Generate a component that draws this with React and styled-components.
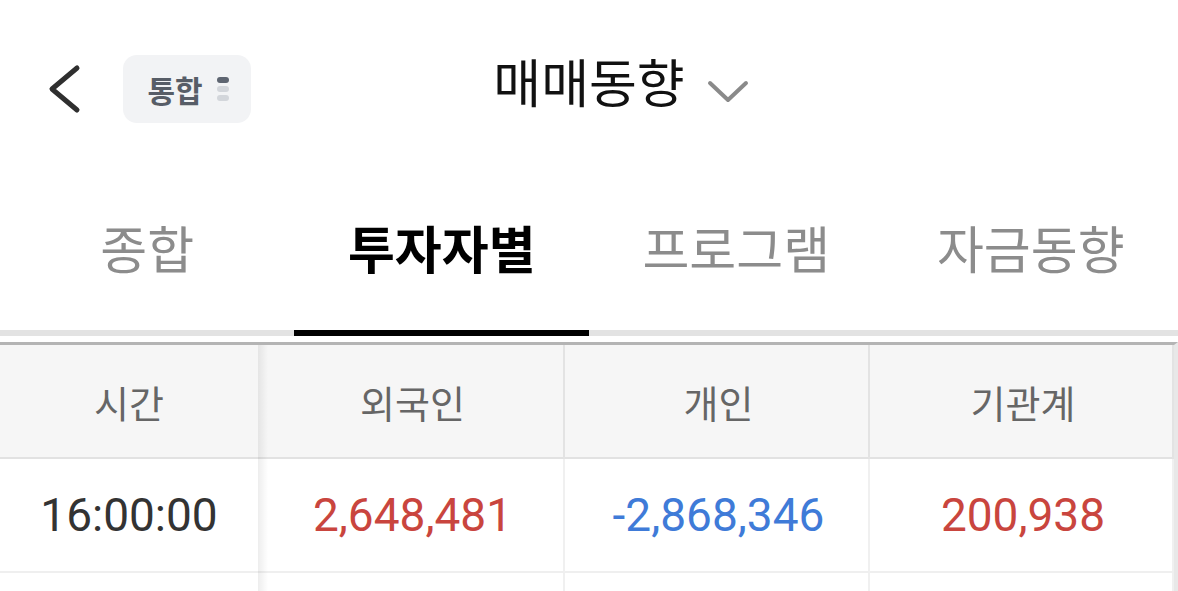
import React from "react";
import styled, { createGlobalStyle } from "styled-components";

const GlobalStyle = createGlobalStyle`
  html, body {
    margin: 0;
    padding: 0;
    background: #ffffff;
    overflow: hidden;
  }
  body {
    font-family: "Noto Sans CJK KR", "Noto Sans", Roboto, sans-serif;
    -webkit-font-smoothing: antialiased;
  }
  * { box-sizing: border-box; }
`;

const Page = styled.div`
  width: 1178px;
  display: flex;
  flex-direction: column;
`;

/* ---------- top bar ---------- */
const TopBar = styled.header`
  height: 170px;
  padding-top: 8px;
  display: grid;
  grid-template-columns: 1fr auto 1fr;
  align-items: center;
`;

const TopLeft = styled.div`
  display: flex;
  align-items: center;
  padding-left: 45px;
  gap: 40px;
`;

const IconButton = styled.button`
  border: 0;
  background: none;
  padding: 0;
  display: flex;
  align-items: center;
  cursor: pointer;
`;

const MarketChip = styled.button`
  height: 68px;
  width: 128px;
  border: 0;
  border-radius: 14px;
  background: #f2f3f5;
  display: flex;
  align-items: center;
  justify-content: center;
  gap: 14px;
  padding: 0 0 0 2px;
  font-family: "Noto Sans CJK KR", sans-serif;
  font-size: 30px;
  font-weight: 700;
  color: #575d67;
  cursor: pointer;
`;

const DotStack = styled.span`
  display: flex;
  flex-direction: column;
  gap: 3px;
`;

const Dot = styled.span`
  width: 12px;
  height: 6px;
  border-radius: 3px;
  background: ${(p) => (p.$on ? "#5e6571" : "#d3d6db")};
`;

const Title = styled.h1`
  margin: -16px 0 0;
  font-size: 52px;
  font-weight: 400;
  color: #111111;
  line-height: 1;
`;

const TopRight = styled.div`
  display: flex;
  align-items: center;
  padding-left: 22px;
  padding-top: 6px;
`;

/* ---------- tabs ---------- */
const Tabs = styled.nav`
  display: grid;
  grid-template-columns: repeat(4, 1fr);
  border-bottom: 6px solid #e3e3e3;
`;

const Tab = styled.button`
  height: 160px;
  border: 0;
  background: none;
  position: relative;
  font-family: "Noto Sans CJK KR", sans-serif;
  font-size: 51px;
  font-weight: ${(p) => (p.$active ? 700 : 400)};
  color: ${(p) => (p.$active ? "#000000" : "#8c8c8c")};
  padding: 0 0 6px;
  cursor: pointer;

  &::after {
    content: "";
    display: ${(p) => (p.$active ? "block" : "none")};
    position: absolute;
    left: -1px;
    right: 0;
    bottom: -6px;
    height: 6px;
    background: #000000;
  }
`;

/* ---------- table ---------- */
const Table = styled.div`
  margin-top: 6px;
  border-top: 3px solid #b4b4b4;
  border-right: 4px solid #e8e8e8;
  display: grid;
  grid-template-columns: 258px 307px 305px 1fr;
`;

const Cell = styled.div`
  position: relative;
  display: flex;
  align-items: center;
  justify-content: center;
  height: 114px;
  background: ${(p) => (p.$head ? "#f6f6f6" : "#ffffff")};
  border-bottom: 2px solid ${(p) => (p.$head ? "#e2e2e2" : "#efefef")};
  border-right: ${(p) => (p.$sticky ? "0" : "2px solid " + (p.$head ? "#e3e3e3" : "#f0f0f0"))};
  font-family: ${(p) =>
    p.$head ? `"Noto Sans CJK KR", sans-serif` : `Roboto, "Noto Sans CJK KR", sans-serif`};
  font-size: ${(p) => (p.$head ? "38px" : "46px")};
  font-weight: 400;
  color: ${(p) => p.$color || (p.$head ? "#666666" : "#333333")};
  padding-left: ${(p) => (p.$sticky ? "0" : "4px")};

  &::after {
    content: "";
    display: ${(p) => (p.$sticky ? "block" : "none")};
    position: absolute;
    top: 0;
    bottom: -2px;
    right: -10px;
    width: 10px;
    background: linear-gradient(to right, rgba(0, 0, 0, 0.07), rgba(0, 0, 0, 0));
    z-index: 1;
  }
`;

const ShortCell = styled(Cell)`
  height: 20px;
  border-bottom: 0;
`;

const BackIcon = () => (
  <svg width="38" height="50" viewBox="0 0 38 50">
    <path d="M32 4 L7 25 L32 46" fill="none" stroke="#2f2f2f" strokeWidth="5" strokeLinecap="round" strokeLinejoin="round" />
  </svg>
);

const ChevronDown = () => (
  <svg width="42" height="24" viewBox="0 0 42 24">
    <path d="M3 3 L21 20 L39 3" fill="none" stroke="#8a8a8a" strokeWidth="4" strokeLinecap="round" strokeLinejoin="round" />
  </svg>
);

const tabs = ["종합", "투자자별", "프로그램", "자금동향"];
const columns = ["시간", "외국인", "개인", "기관계"];
const RED = "#c9453e";
const BLUE = "#3f7bd8";

const rows = [
  { time: "16:00:00", foreign: 2648481, retail: -2868346, inst: 200938 },
];

const fmt = (n) => n.toLocaleString("en-US");
const tone = (n) => (n < 0 ? BLUE : RED);

export default function App() {
  return (
    <Page>
      <GlobalStyle />
      <TopBar>
        <TopLeft>
          <IconButton aria-label="뒤로">
            <BackIcon />
          </IconButton>
          <MarketChip>
            통합
            <DotStack>
              <Dot $on />
              <Dot />
              <Dot />
            </DotStack>
          </MarketChip>
        </TopLeft>
        <Title>매매동향</Title>
        <TopRight>
          <ChevronDown />
        </TopRight>
      </TopBar>

      <Tabs>
        {tabs.map((t, i) => (
          <Tab key={t} $active={i === 1}>
            {t}
          </Tab>
        ))}
      </Tabs>

      <Table>
        {columns.map((c, i) => (
          <Cell key={c} $head $sticky={i === 0}>
            {c}
          </Cell>
        ))}
        {rows.map((r) => (
          <React.Fragment key={r.time}>
            <Cell $sticky>{r.time}</Cell>
            <Cell $color={tone(r.foreign)}>{fmt(r.foreign)}</Cell>
            <Cell $color={tone(r.retail)}>{fmt(r.retail)}</Cell>
            <Cell $color={tone(r.inst)}>{fmt(r.inst)}</Cell>
          </React.Fragment>
        ))}
        <ShortCell $sticky />
        <ShortCell />
        <ShortCell />
        <ShortCell />
      </Table>
    </Page>
  );
}
